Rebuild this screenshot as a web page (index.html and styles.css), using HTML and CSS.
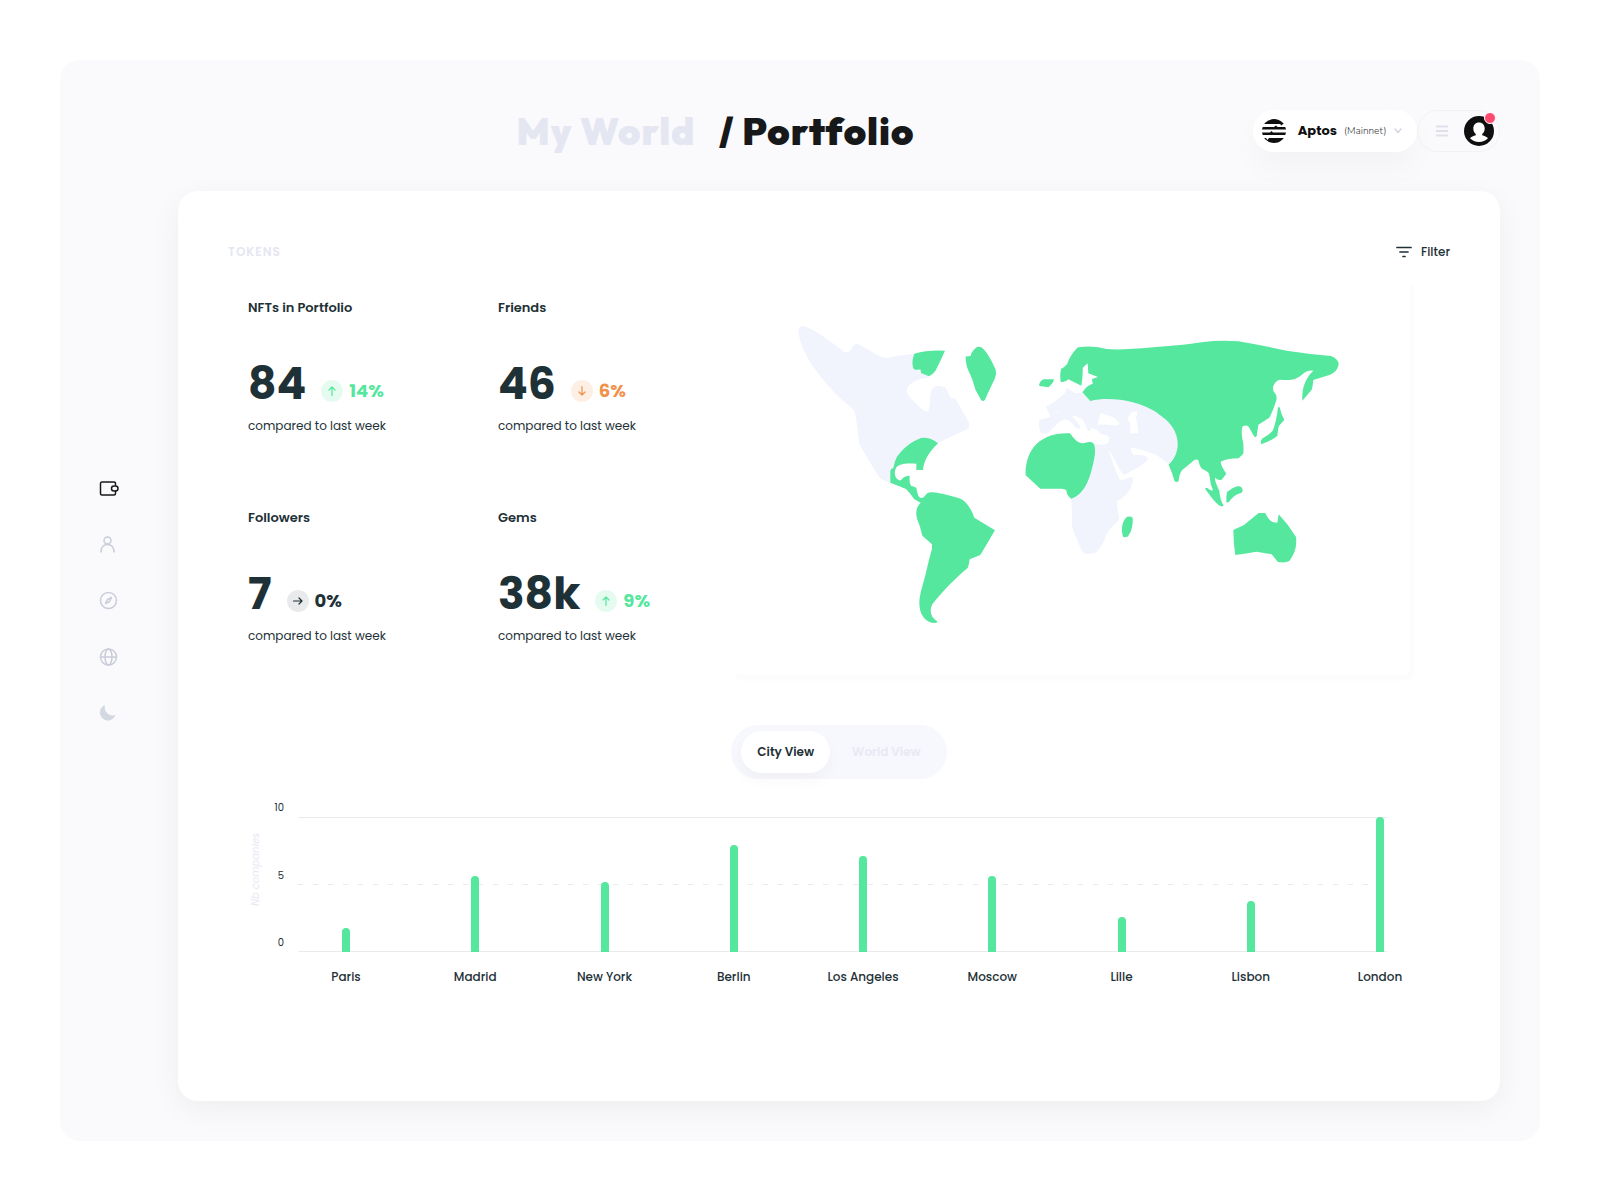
FILE: index.html
```html
<!DOCTYPE html>
<html lang="en">
<head>
    <meta charset="UTF-8">
    <meta name="viewport" content="width=device-width, initial-scale=1.0">
    <title>My World / Portfolio</title>
    <link rel="stylesheet" href="styles.css">
</head>
<body>
    <div class="shell">
        <nav class="sidebar" aria-label="Main">
            <a href="#wallet" class="active" aria-label="Wallet">
                <svg viewBox="0 0 20 20"><path d="M16.500 6V4.500a1.500 1.500 0 0 0-1.500-1.500H3A1.500 1.500 0 0 0 1.500 4.500v10A1.500 1.500 0 0 0 3 16h12a1.500 1.500 0 0 0 1.500-1.500V12"/><rect x="12.500" y="7" width="6.500" height="5" rx="2.500"/></svg>
            </a>
            <a href="#profile" aria-label="Profile">
                <svg viewBox="0 0 20 20"><circle cx="8.500" cy="5.500" r="3.500"/><path d="M2 17c0-4.500 2.500-7.500 6.500-7.500S15 12.500 15 17"/></svg>
            </a>
            <a href="#explore" aria-label="Explore">
                <svg viewBox="0 0 20 20"><circle cx="9.500" cy="9.500" r="8"/><path d="M12.500 6.500l-2 4-4 2 2-4z"/></svg>
            </a>
            <a href="#world" aria-label="World">
                <svg viewBox="0 0 20 20"><circle cx="9.500" cy="10" r="8"/><ellipse cx="9.500" cy="10" rx="3.500" ry="8"/><path d="M1.500 10h16"/></svg>
            </a>
            <a href="#theme" class="moon" aria-label="Dark mode">
                <svg viewBox="0 0 20 20"><path d="M6 2A8 8 0 1 0 16.500 12 8.200 8.200 0 0 1 6 2z"/></svg>
            </a>
        </nav>

        <div class="main">
            <header class="header">
                <h1><a href="#world">My World</a> <span>/ Portfolio</span></h1>
                <div class="network">
                    <svg class="logo" viewBox="0 0 24 24">
                        <defs><clipPath id="disc"><circle cx="12" cy="12" r="12"/></clipPath></defs>
                        <g clip-path="url(#disc)">
                            <path d="M0 0h24v5h-3l-1.500 1.500L18 5H0zM0 8h12l2-1.500L15.500 8H24v2.500H0zM0 13.500h8L9.500 12l1.500 1.500h13V16H0zM0 19h4l1.500 2L7 19h17v5H0z"/>
                        </g>
                    </svg>
                    <label for="network">Aptos</label>
                    <div class="select">
                        <select id="network">
                            <option>(Mainnet)</option>
                            <option>(Testnet)</option>
                        </select>
                        <svg viewBox="0 0 8 6"><path d="M1 1l3 3.500L7 1"/></svg>
                    </div>
                </div>
                <div class="account">
                    <button class="menu" aria-label="Menu">
                        <svg viewBox="0 0 12 12"><path d="M0 1.500h12M0 6h12M0 10.500h12"/></svg>
                    </button>
                    <a href="#account" class="avatar" aria-label="Account">
                        <svg viewBox="0 0 30 30">
                            <circle cx="15" cy="15" r="15"/>
                            <path class="face" d="M15 6.500c-3.700 0-5.700 2.700-5.700 6 0 2.400 1 4.200 2.500 5.400v1.400c-2.300.6-4.600 1.400-5.800 3C8.200 24.500 11.500 26 15 26s6.800-1.500 9-3.700c-1.200-1.600-3.500-2.400-5.800-3v-1.400c1.500-1.200 2.500-3 2.500-5.400 0-3.300-2-6-5.700-6z"/>
                        </svg>
                        <span class="dot"></span>
                    </a>
                </div>
            </header>

            <main class="card">
                <div class="card-head">
                    <h2>TOKENS</h2>
                    <button class="filter">
                        <svg viewBox="0 0 16 12"><path d="M1 1.500h14M4 6h8M7 10.500h2"/></svg>
                        Filter
                    </button>
                </div>

                <div class="overview">
                    <div class="stats">
                        <section class="stat">
                            <h3>NFTs in Portfolio</h3>
                            <div class="value">
                                <strong>84</strong>
                                <span class="change up">
                                    <svg viewBox="0 0 22 22"><circle cx="11" cy="11" r="11"/><path d="M11 15.500v-8M8 10l3-3 3 3"/></svg>
                                    14%
                                </span>
                            </div>
                            <p>compared to last week</p>
                        </section>
                        <section class="stat">
                            <h3>Friends</h3>
                            <div class="value">
                                <strong>46</strong>
                                <span class="change down">
                                    <svg viewBox="0 0 22 22"><circle cx="11" cy="11" r="11"/><path d="M11 6.500v8M8 12l3 3 3-3"/></svg>
                                    6%
                                </span>
                            </div>
                            <p>compared to last week</p>
                        </section>
                        <section class="stat">
                            <h3>Followers</h3>
                            <div class="value">
                                <strong>7</strong>
                                <span class="change flat">
                                    <svg viewBox="0 0 22 22"><circle cx="11" cy="11" r="11"/><path d="M6.500 11h8M12 8l3 3-3 3"/></svg>
                                    0%
                                </span>
                            </div>
                            <p>compared to last week</p>
                        </section>
                        <section class="stat">
                            <h3>Gems</h3>
                            <div class="value">
                                <strong>38k</strong>
                                <span class="change up">
                                    <svg viewBox="0 0 22 22"><circle cx="11" cy="11" r="11"/><path d="M11 15.500v-8M8 10l3-3 3 3"/></svg>
                                    9%
                                </span>
                            </div>
                            <p>compared to last week</p>
                        </section>
                    </div>

                    <div class="map">
                        <svg viewBox="0 0 2040 1194" role="img" aria-label="World map">
                            <!-- North America, Greenland, Ireland -->
                            <g transform="translate(150 100)">
                                <path class="land" d="M55 62C55 50 68 44 80 50C115 65 160 100 192 124Q198 128 207 124C216 118 218 105 226 102Q231 99 238 103L292 134Q305 143 322 143C350 137 375 133 405 131L404 175L424 188L446 197V202C420 204 382 215 380 243C382 258 400 272 428 298Q436 305 446 303C450 285 450 262 453 242C462 224 478 222 497 232C505 245 507 255 512 264L525 264C540 288 556 315 566 336Q570 352 562 357C535 368 500 385 472 400L425 390L350 460L335 518Q310 514 298 500C280 475 255 430 238 400C235 370 230 330 224 302C210 285 190 275 165 248C110 190 62 125 55 62Z"/>
                                <path class="on" d="M403 130Q445 118 495 121C487 138 475 165 466 182Q458 193 447 198L423 188L421 177Q412 180 402 177C395 165 397 145 403 130Z"/>
                                <path class="on" d="M557 138Q565 139 572 136Q573 126 587 113Q596 106 607 113C625 130 638 158 647 178Q650 190 645 204C635 225 625 245 615 268Q610 275 604 270Q594 252 587 240C580 218 575 198 567 185Q556 162 557 138Z"/>
                                <path class="on" d="M777 224Q781 210 791 207H822Q820 220 805 231L779 227Z"/>
                            </g>
                            <!-- Central and South America -->
                            <g transform="translate(360 430)">
                                <path class="on" d="M264 69C240 92 221 120 219 149H199V130C180 129 155 128 142 138C130 152 132 172 147 180Q154 182 158 174Q165 165 179 166C178 185 180 197 188 198L199 202Q202 222 208 231Q218 236 225 226Q232 215 246 216C275 218 310 228 335 237C352 248 366 270 373 292L435 330L391 404L359 417Q357 435 353 443C320 470 280 510 250 548C238 562 238 590 262 603Q262 608 256 608C225 608 207 580 208 545C209 520 220 490 226 465Q236 420 246 385V372L217 346Q212 320 201 295C196 272 200 260 212 247L193 237Q180 217 168 206Q145 196 121 187V152Q122 145 130 143Q135 118 143 106C165 78 185 64 213 53Q240 50 264 69Z"/>
                            </g>
                            <!-- Europe, Africa, Asia, Oceania -->
                            <g transform="translate(840 100)">
                                <path class="land" d="M88 328L122 320L107 288C125 284 150 262 168 245V232L194 248H215L241 268C330 250 445 290 480 328C512 365 515 420 476 463Q455 440 430 430C410 422 385 416 362 411Q362 425 372 434Q395 432 408 438Q415 444 412 450C400 465 370 480 342 494Q335 488 330 478L302 426Q296 418 298 428C308 455 318 485 328 505Q332 512 340 508L364 499Q370 500 369 505C368 530 350 560 322 571C320 590 324 605 327 620Q326 632 322 635C300 650 290 670 285 685C275 705 265 725 252 728Q235 734 220 728C210 712 190 665 186 645Q188 600 182 562L230 450L246 397Q258 402 270 403Q298 405 298 385Q296 374 286 374Q272 374 262 360Q254 353 243 352Q244 360 238 363Q230 360 228 345L218 328Q200 318 186 315L188 320L209 344Q212 356 207 357Q195 354 186 338Q175 325 163 328C145 332 130 352 120 363Q108 374 95 369Q85 360 88 328Z"/>
                                <path class="sea" d="M271 308L314 322Q322 332 329 338Q325 348 316 346Q290 341 262 343Q268 325 271 308Z"/>
                                <path class="sea" d="M365 305L381 303Q384 310 377 322Q384 340 384 369H360L361 338Q352 328 354 322Z"/>
                                <path class="sea" d="M134 308L162 297L140 308Z"/>
                                <path class="on" d="M180 369C192 385 200 397 217 399C228 400 232 392 248 397C258 405 256 430 252 448C243 490 230 550 183 565Q170 555 169 540Q165 535 155 535H91L47 495C45 440 70 366 180 369Z"/>
                                <path class="on" d="M241 272L217 246Q230 225 248 220L246 206L264 200L235 189L233 159L218 172Q219 200 214 226L175 207Q165 218 152 214Q149 195 153 176Q162 172 172 160C178 140 200 112 205 111Q250 104 290 116Q330 120 430 111C480 107 520 104 580 95Q635 88 685 93Q750 104 830 121Q895 131 963 137Q985 145 986 162Q982 185 960 193L910 209Q908 230 905 238L877 271C875 235 885 205 910 181Q895 178 883 187C860 207 845 212 810 208Q795 210 789 230Q789 245 794 247Q802 255 799 270Q790 300 778 322L745 343L740 378Q736 383 732 378L716 349Q708 343 698 348Q693 360 697 385Q702 400 700 430L686 444Q655 444 632 454Q632 465 649 490L635 508Q625 512 615 502Q613 510 628 541Q630 570 641 585Q637 590 631 587C615 578 600 555 585 535Q588 532 592 533Q600 542 609 540Q600 520 599 500Q598 487 592 484L574 474Q568 465 565 450Q560 445 553 449L516 480Q508 490 506 512Q500 517 494 513Q488 490 476 463C512 430 515 370 468 328L438 305C380 270 300 258 241 272Z"/>
                                <path class="on" d="M804 291H809Q813 312 823 328L806 348L802 376Q785 392 753 402Q752 390 756 385Q780 372 789 360Q800 330 804 291Z"/>
                                <path class="on" d="M649 576Q648 560 651 545Q665 532 682 528Q695 525 698 538Q698 547 690 549Q670 555 656 576Z"/>
                                <path class="on" d="M670 659L702 644L746 608H766Q775 630 790 636L802 637L806 612Q835 642 858 680Q863 720 838 752Q825 759 804 755L785 732L739 724Q710 730 676 734Q670 700 670 659Z"/>
                                <path class="on" d="M350 620Q360 616 368 622C370 650 360 672 352 679L340 681C332 660 335 635 350 620Z"/>
                            </g>
                        </svg>
                    </div>
                </div>

                <div class="toggle">
                    <button class="selected" aria-pressed="true">City View</button>
                    <button aria-pressed="false">World View</button>
                </div>

                <div class="chart">
                    <div class="axis-title">Nb companies</div>
                    <div class="ticks"><span>10</span><span>5</span><span>0</span></div>
                    <div class="lines"><i></i><i class="dashed"></i><i></i></div>
                    <div class="bars">
                        <div class="col"><div class="track"><div class="bar" style="height: 18%"></div></div>Paris</div>
                        <div class="col"><div class="track"><div class="bar" style="height: 56%"></div></div>Madrid</div>
                        <div class="col"><div class="track"><div class="bar" style="height: 52%"></div></div>New York</div>
                        <div class="col"><div class="track"><div class="bar" style="height: 79%"></div></div>Berlin</div>
                        <div class="col"><div class="track"><div class="bar" style="height: 71%"></div></div>Los Angeles</div>
                        <div class="col"><div class="track"><div class="bar" style="height: 56%"></div></div>Moscow</div>
                        <div class="col"><div class="track"><div class="bar" style="height: 26%"></div></div>Lille</div>
                        <div class="col"><div class="track"><div class="bar" style="height: 38%"></div></div>Lisbon</div>
                        <div class="col"><div class="track"><div class="bar" style="height: 100%"></div></div>London</div>
                    </div>
                </div>
            </main>
        </div>
    </div>
</body>
</html>
```

FILE: styles.css
```css
* {
    box-sizing: border-box;
}
body {
    margin: 0;
    padding: 60px;
    background: #ffffff;
    color: #1e3137;
    font-family: 'Poppins', 'Inter', sans-serif;
    font-size: 12px;
    line-height: 20px;
}
h1, h2, h3, p {
    margin: 0;
}
a {
    color: inherit;
    text-decoration: none;
}
button, select {
    border: none;
    background: none;
    padding: 0;
    color: inherit;
    font: inherit;
    cursor: pointer;
}
svg {
    display: block;
    fill: none;
    stroke-linecap: round;
    stroke-linejoin: round;
}

.shell {
    display: grid;
    grid-template-columns: 118px 1fr;
    min-height: calc(100vh - 120px);
    padding-right: 40px;
    border-radius: 20px;
    background: #fafafc;
}

/* sidebar */
.sidebar {
    display: flex;
    flex-direction: column;
    align-items: center;
    justify-content: center;
    gap: 36px;
    padding-right: 20px;
    color: #c9cdd9;
}
.sidebar svg {
    width: 20px;
    height: 20px;
    stroke: currentColor;
    stroke-width: 1.5;
}
.sidebar .active {
    color: #17181a;
}
.sidebar .moon svg {
    fill: #d3d8e2;
    stroke: none;
}

/* header */
.main {
    display: flex;
    flex-direction: column;
    padding: 50px 0 40px;
}
.header {
    display: flex;
    align-items: center;
    margin-bottom: 39px;
}
.header h1 {
    flex: 1;
    text-align: center;
    font-family: 'Gilroy', 'Outfit', 'Poppins', sans-serif;
    font-size: 38px;
    font-weight: 900;
    line-height: 42px;
    letter-spacing: 1px;
    color: #17181a;
}
.header h1 a {
    margin-right: 16px;
    color: #e4e6f2;
}
.network {
    display: flex;
    align-items: center;
    height: 42px;
    padding: 0 15px 0 9px;
    border-radius: 21px;
    background: #ffffff;
    box-shadow: 0 16px 30px rgba(20, 20, 40, 0.03);
    color: #0f0f10;
}
.logo {
    width: 24px;
    height: 24px;
    margin-right: 12px;
    fill: #0f0f10;
}
.network label {
    margin-right: 7px;
    font-size: 13px;
    font-weight: 700;
}
.select {
    display: grid;
    align-items: center;
}
.select select, .select svg {
    grid-area: 1 / 1;
}
.select select {
    appearance: none;
    padding-right: 15px;
    font-family: 'Nunito', 'Lato', sans-serif;
    font-size: 10px;
    font-weight: 300;
    color: #3c3c40;
}
.select svg {
    justify-self: end;
    width: 8px;
    height: 6px;
    stroke: #d5d6e3;
    stroke-width: 1.5;
    pointer-events: none;
}
.account {
    display: flex;
    align-items: center;
    gap: 16px;
    height: 42px;
    padding: 0 5px 0 18px;
    border: 1px solid #f2f2f5;
    border-radius: 21px;
}
.menu svg {
    width: 12px;
    height: 12px;
    stroke: #e0e0ec;
    stroke-width: 2;
    stroke-linecap: butt;
}
.avatar {
    position: relative;
}
.avatar svg {
    width: 30px;
    height: 30px;
    fill: #0f0f10;
}
.avatar .face {
    fill: #ffffff;
}
.dot {
    position: absolute;
    top: -4px;
    right: -2px;
    width: 12px;
    height: 12px;
    border: 1px solid #ffffff;
    border-radius: 50%;
    background: #ff4a70;
}

/* card */
.card {
    flex: 1;
    padding: 51px 50px;
    border-radius: 20px;
    background: #ffffff;
    box-shadow: 0 8px 30px rgba(20, 20, 40, 0.05);
}
.card-head {
    display: flex;
    justify-content: space-between;
    margin-bottom: 15px;
}
.card-head h2 {
    font-size: 12px;
    font-weight: 600;
    line-height: 20px;
    letter-spacing: 1px;
    color: #e4e6f2;
}
.filter {
    display: flex;
    align-items: center;
    gap: 9px;
    font-weight: 500;
}
.filter svg {
    width: 16px;
    height: 12px;
    stroke: currentColor;
    stroke-width: 1.7;
}
.overview {
    display: grid;
    grid-template-columns: 482px 1fr;
    padding: 0 40px 0 20px;
}
.stats {
    display: grid;
    grid-template-columns: 250px 1fr;
    grid-auto-rows: 210px;
    align-content: start;
    height: 398px;
    padding-top: 21px;
}
.stat h3 {
    font-size: 13px;
    font-weight: 600;
    line-height: 20px;
}
.value {
    display: flex;
    align-items: flex-end;
    gap: 15px;
    margin: 38px 0 4px;
}
.value strong {
    font-size: 44px;
    font-weight: 700;
    line-height: 56px;
}
.change {
    display: flex;
    align-items: center;
    gap: 6px;
    padding-bottom: 10px;
    font-size: 18px;
    font-weight: 700;
    line-height: 22px;
}
.change svg {
    width: 22px;
    height: 22px;
    stroke: currentColor;
    stroke-width: 1.2;
}
.change circle {
    fill: currentColor;
    stroke: none;
    opacity: 0.15;
}
.up {
    color: #54e79d;
}
.down {
    color: #f0924a;
}
.flat circle {
    opacity: 0.1;
}
.map {
    border-radius: 6px;
    box-shadow: 4px 5px 4px rgba(20, 20, 60, 0.015);
}
.map svg {
    width: 100%;
}
.land {
    fill: #f1f3fd;
}
.on {
    fill: #54e79d;
}
.sea {
    fill: #ffffff;
}

.toggle {
    display: flex;
    width: fit-content;
    margin: 50px auto 21px;
    padding: 6px 10px;
    border-radius: 27px;
    background: #f7f8fd;
}
.toggle button {
    height: 42px;
    padding: 0 16px;
    border-radius: 21px;
    font-weight: 600;
    color: #e8e9f3;
}
.toggle button + button {
    padding-left: 22px;
}
.toggle .selected {
    background: #ffffff;
    box-shadow: 0 8px 16px rgba(20, 20, 60, 0.03);
    color: #1e3137;
}

/* chart */
.chart {
    display: grid;
    grid-template-columns: 16px 20px 1fr;
    padding: 0 22px 0 20px;
}
.axis-title {
    height: 151px;
    padding-top: 12px;
    writing-mode: vertical-rl;
    transform: rotate(180deg);
    text-align: center;
    font-size: 10px;
    font-style: italic;
    line-height: 16px;
    color: #e8e9f3;
}
.ticks {
    display: flex;
    flex-direction: column;
    justify-content: space-between;
    height: 151px;
    text-align: right;
    font-size: 10px;
    line-height: 16px;
}
.lines, .bars {
    grid-area: 1 / 3;
    margin: 17px 0 0 14px;
}
.lines {
    display: flex;
    flex-direction: column;
    justify-content: space-between;
    height: 135px;
    margin-right: 41px;
}
.lines i {
    height: 1px;
    background: #e8eaeb;
}
.lines .dashed {
    background: repeating-linear-gradient(90deg, #e8eaeb 0 5px, transparent 5px 15px);
}
.bars {
    display: flex;
    justify-content: space-between;
}
.col {
    width: 96px;
    text-align: center;
    font-weight: 500;
}
.track {
    display: flex;
    align-items: flex-end;
    justify-content: center;
    height: 135px;
    margin-bottom: 15px;
}
.bar {
    width: 8px;
    border-radius: 4px 4px 0 0;
    background: #54e79d;
}
```
